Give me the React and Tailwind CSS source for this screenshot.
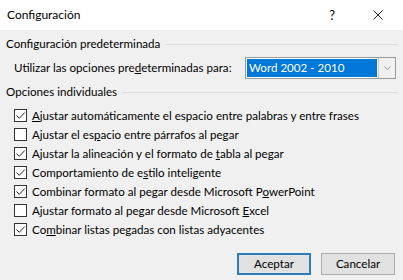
import { useState } from "react";

const options = [
  { pre: "", key: "A", post: "justar automáticamente el espacio entre palabras y entre frases", on: true },
  { pre: "Ajustar el es", key: "p", post: "acio entre párrafos al pegar", on: false },
  { pre: "Ajustar la alineación y el formato de ", key: "t", post: "abla al pegar", on: true },
  { pre: "Comportamiento de e", key: "s", post: "tilo inteligente", on: true },
  { pre: "Combinar formato al pegar desde Microsoft P", key: "o", post: "werPoint", on: true },
  { pre: "Ajustar formato al pegar desde Microsoft ", key: "E", post: "xcel", on: false },
  { pre: "Co", key: "m", post: "binar listas pegadas con listas adyacentes", on: true },
];

function Check({ on }) {
  return (
    <span className="w-[13px] h-[13px] border border-[#333] bg-white flex items-center justify-center shrink-0">
      {on && (
        <svg width="11" height="11" viewBox="0 0 11 11" fill="none">
          <path d="M1.5 5.5 L4.3 8.3 L9.8 2.5" stroke="#222" strokeWidth="1" />
        </svg>
      )}
    </span>
  );
}

function GroupTitle({ children }) {
  return (
    <div className="flex items-center h-[16px]">
      <span className="pr-[6px] whitespace-nowrap">{children}</span>
      <span className="flex-1 h-px bg-[#dcdcdc]" />
    </div>
  );
}

export default function App() {
  const [checks, setChecks] = useState(() => options.map((o) => o.on));

  return (
    <div className="w-[403px] h-[280px] bg-[#f0f0f0] text-black text-[11.6px] leading-[16px] font-['Lato',sans-serif] overflow-hidden">
      {/* Title bar */}
      <div className="h-[30px] bg-white flex items-center pl-[7px] pr-[20px]">
        <span className="text-[12px]">Configuración</span>
        <span className="ml-auto mr-[38px] text-[13px]">?</span>
        <svg width="10" height="10" viewBox="0 0 10 10">
          <path d="M0.5 0.5 L9.5 9.5 M9.5 0.5 L0.5 9.5" stroke="#222" strokeWidth="1" />
        </svg>
      </div>

      <div className="px-[6px] pt-[6px]">
        <GroupTitle>Configuración predeterminada</GroupTitle>

        <div className="flex items-center mt-[5px] pl-[8px] pr-[1px]">
          <span className="whitespace-nowrap">
            Utilizar las opciones pre<u>d</u>eterminadas para:
          </span>
          <div className="ml-auto w-[151px] h-[22px] border border-[#9a9a9a] bg-white flex shrink-0">
            <div className="flex-1 m-[1px] bg-[#0078d7] text-white flex items-center pl-[2px] whitespace-nowrap">
              Word 2002 - 2010
            </div>
            <div className="w-[17px] border-l border-[#cfcfcf] bg-[#f0f0f0] flex items-center justify-center">
              <svg width="7" height="4" viewBox="0 0 7 4">
                <path d="M0.5 0.5 L3.5 3.5 L6.5 0.5" stroke="#777" fill="none" strokeWidth="0.8" />
              </svg>
            </div>
          </div>
        </div>

        <div className="mt-[5px]">
          <GroupTitle>Opciones individuales</GroupTitle>
        </div>

        <div className="mt-[6px] pl-[8px] flex flex-col">
          {options.map((o, i) => (
            <label
              key={i}
              className="h-[19px] flex items-center gap-[5px] whitespace-nowrap"
              onClick={() => setChecks((c) => c.map((v, j) => (j === i ? !v : v)))}
            >
              <Check on={checks[i]} />
              <span>
                {o.pre}
                <u>{o.key}</u>
                {o.post}
              </span>
            </label>
          ))}
        </div>

        <div className="flex justify-end gap-[10px] mt-[14px] pr-[2px]">
          <button className="w-[74px] h-[22px] border-2 border-[#2f7db8] bg-[#e1e1e1] flex items-center justify-center">
            Aceptar
          </button>
          <button className="w-[74px] h-[22px] border border-[#adadad] bg-[#e1e1e1] flex items-center justify-center">
            Cancelar
          </button>
        </div>
      </div>
    </div>
  );
}
